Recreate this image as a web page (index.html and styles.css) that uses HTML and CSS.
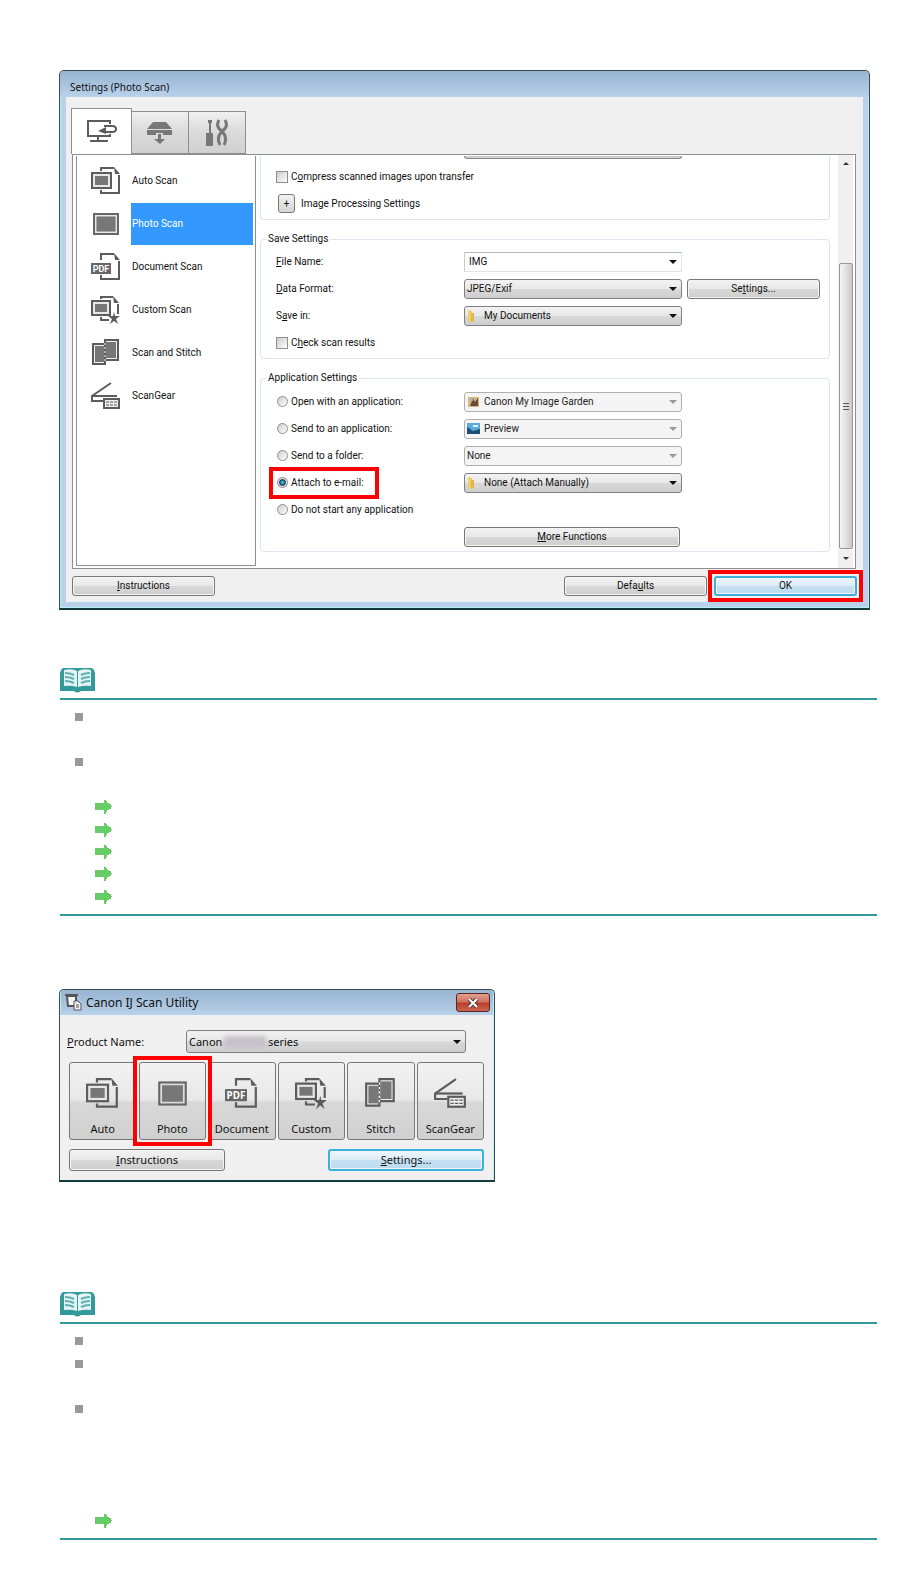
FILE: index.html
```html
<!DOCTYPE html>
<html lang="en">
<head>
    <meta charset="UTF-8">
    <meta name="viewport" content="width=device-width, initial-scale=1.0">
    <title>Attach to e-mail</title>
    <link rel="stylesheet" href="styles.css">
</head>
<body>
    <!-- shared icons -->
    <svg class="sprite" aria-hidden="true">
        <symbol id="i-auto" viewBox="0 0 30 28">
            <path d="M10 4V1h13M28 8v18H10v-3" fill="none" stroke="#5c5c5c" stroke-width="2"/>
            <path d="M23 0l6 7h-5z" fill="#5c5c5c"/>
            <rect x="1" y="6" width="19" height="15" fill="#e8e8e8" stroke="#5c5c5c" stroke-width="2"/>
            <rect x="4" y="9" width="13" height="9" fill="#777"/>
        </symbol>
        <symbol id="i-photo" viewBox="0 0 30 28">
            <rect x="3" y="4" width="24" height="20" fill="#eee" stroke="#666" stroke-width="2"/>
            <rect x="5" y="6" width="20" height="16" fill="#777" stroke="#ddd"/>
        </symbol>
        <symbol id="i-pdf" viewBox="0 0 30 28">
            <path d="M10 7V1h13M28 8v18H10v-4" fill="none" stroke="#5c5c5c" stroke-width="2"/>
            <path d="M23 0l6 7h-5z" fill="#5c5c5c"/>
            <rect x="0" y="10" width="20" height="11" fill="#666"/>
            <text x="10" y="19" font-size="9" font-weight="bold" text-anchor="middle" fill="#fff">PDF</text>
        </symbol>
        <symbol id="i-custom" viewBox="0 0 30 28">
            <path d="M10 3V1h12M27 8v10M10 21v3h8" fill="none" stroke="#5c5c5c" stroke-width="2"/>
            <path d="M22 0l6 7h-5z" fill="#5c5c5c"/>
            <rect x="1" y="5" width="18" height="14" fill="#e8e8e8" stroke="#5c5c5c" stroke-width="2"/>
            <rect x="4" y="8" width="12" height="8" fill="#777"/>
            <path d="M23 16l1 4h5l-4 3 2 5-4-3-4 3 2-5-4-3h5z" fill="#5c5c5c"/>
        </symbol>
        <symbol id="i-stitch" viewBox="0 0 30 28">
            <path d="M2 5h12v20H2zM14 1h13v20H14z" fill="#eee" stroke="#5c5c5c" stroke-width="2"/>
            <rect x="4" y="7" width="9" height="16" fill="#777"/>
            <rect x="15" y="3" width="10" height="16" fill="#777"/>
            <path d="M14 4v20" stroke="#fff" stroke-width="1" stroke-dasharray="2 2"/>
        </symbol>
        <symbol id="i-gear" viewBox="0 0 30 28">
            <path d="M20 1L1 14v5h11" fill="none" stroke="#5c5c5c" stroke-width="2"/>
            <path d="M1 14h25" stroke="#5c5c5c" stroke-width="2"/>
            <rect x="13" y="17" width="15" height="9" fill="#eee" stroke="#5c5c5c" stroke-width="2"/>
            <path d="M15 20h11M15 23h11" stroke="#5c5c5c" stroke-dasharray="3 1"/>
        </symbol>
        <symbol id="i-book" viewBox="0 0 35 26">
            <path d="M3 0h29q3 2 3 5v18H21q-4 3-7 0H0V5q0-3 3-5z" fill="#399"/>
            <path d="M4 2q8-2 13 1v16q-6-2-13-1zM31 2q-8-2-13 1v16q6-2 13-1z" fill="#e4f3f3"/>
            <path d="M5 5q5 0 9 2M5 9q5 0 9 2M5 13q5 0 9 2M30 5q-5 0-9 2M30 9q-5 0-9 2M30 13q-5 0-9 2" fill="none" stroke="#5fb0b0" stroke-width="2"/>
        </symbol>
        <symbol id="i-arrow" viewBox="0 0 17 14">
            <path d="M0 3h9V0h2v1h1v2h2v1h2v2h1v1h-1v2h-2v1h-2v2h-1v2H9v-4H0z" fill="#6c6"/>
        </symbol>
        <symbol id="i-folder" viewBox="0 0 13 14">
            <path d="M1 1l4 1v10l-4 1z" fill="#f0cf6a"/>
            <path d="M4 4h3v8l-3 1z" fill="#e0b54c"/>
            <path d="M8 9l4 1v2l-5 1z" fill="#d8d8d8"/>
        </symbol>
    </svg>

    <main class="page">
        <section class="window settings">
            <header class="titlebar">Settings (Photo Scan)</header>
            <div class="client">
                <nav class="tabs">
                    <button class="tab active" aria-label="Scanning from a computer">
                        <svg width="32" height="26" viewBox="0 0 32 26" fill="none" stroke="#5c5c5c" stroke-width="2">
                            <path d="M24 5V2H2v15h22v-2M12 17v5M4 22h18"/>
                            <path d="M18 7h8q4 0 4 3t-4 3h-8"/>
                            <path d="M12 12l8-4v7z" fill="#5c5c5c" stroke="none"/>
                        </svg>
                    </button>
                    <button class="tab" aria-label="Scanning from the operation panel">
                        <svg width="28" height="26" viewBox="0 0 28 26" fill="#777">
                            <path d="M7 2h13l6 7H1zM1 10h25v5h-9v-2h-7v2H1z"/>
                            <path d="M12 14h3v5h4l-5 5-6-5h4z"/>
                        </svg>
                    </button>
                    <button class="tab" aria-label="General settings">
                        <svg width="24" height="28" viewBox="0 0 24 28" fill="#777">
                            <path d="M3 1h4v3H6v10h2v13H1V14h3V4H3z"/>
                            <path d="M14 1q-4 7 3 11q-6 7-2 14M20 1q4 7-3 11q6 7 2 14" fill="none" stroke="#777" stroke-width="3"/>
                        </svg>
                    </button>
                </nav>

                <div class="panel">
                    <ul class="scan-list">
                        <li><svg><use href="#i-auto"/></svg><span>Auto Scan</span></li>
                        <li class="selected"><svg><use href="#i-photo"/></svg><span>Photo Scan</span></li>
                        <li><svg><use href="#i-pdf"/></svg><span>Document Scan</span></li>
                        <li><svg><use href="#i-custom"/></svg><span>Custom Scan</span></li>
                        <li><svg><use href="#i-stitch"/></svg><span>Scan and Stitch</span></li>
                        <li><svg><use href="#i-gear"/></svg><span>ScanGear</span></li>
                    </ul>

                    <form class="options">
                        <fieldset class="continued">
                            <div class="row cut"><span></span><div class="cut-combo"></div></div>
                            <div class="row">
                                <label class="check"><input type="checkbox"><span>C<u>o</u>mpress scanned images upon transfer</span></label>
                            </div>
                            <div class="row">
                                <div class="expander"><button type="button" id="expand">+</button><label for="expand">Image Processing Settings</label></div>
                            </div>
                        </fieldset>

                        <fieldset>
                            <legend>Save Settings</legend>
                            <div class="row">
                                <label for="file-name"><u>F</u>ile Name:</label>
                                <div class="combo editable"><input type="text" id="file-name" value="IMG"></div>
                            </div>
                            <div class="row">
                                <label for="format"><u>D</u>ata Format:</label>
                                <div class="combo"><select id="format"><option>JPEG/Exif</option></select></div>
                                <button type="button" class="btn side">Se<u>t</u>tings...</button>
                            </div>
                            <div class="row">
                                <label for="save-in">S<u>a</u>ve in:</label>
                                <div class="combo with-icon">
                                    <svg class="combo-icon"><use href="#i-folder"/></svg>
                                    <select id="save-in"><option>My Documents</option></select>
                                </div>
                            </div>
                            <div class="row">
                                <label class="check"><input type="checkbox"><span>C<u>h</u>eck scan results</span></label>
                            </div>
                        </fieldset>

                        <fieldset class="apps">
                            <legend>Application Settings</legend>
                            <div class="row">
                                <label class="check"><input type="radio" name="app"><span>Open with an application:</span></label>
                                <div class="combo with-icon off">
                                    <svg class="combo-icon" viewBox="0 0 13 14"><path d="M1 2h11v10H1z" fill="#d9b87c"/><path d="M3 11l3-8 2 4 3-4v8z" fill="#6b4a35"/><path d="M3 3h3v3H3z" fill="#9db8c9"/></svg>
                                    <select aria-label="Application to open" disabled><option>Canon My Image Garden</option></select>
                                </div>
                            </div>
                            <div class="row">
                                <label class="check"><input type="radio" name="app"><span>Send to an application:</span></label>
                                <div class="combo with-icon off">
                                    <svg class="combo-icon" viewBox="0 0 13 14"><path d="M0 1h13v11H0z" fill="#5aa9dc"/><path d="M0 12V5l6 4 7-2v5z" fill="#1d4f70"/><path d="M6 3h5v2H6z" fill="#e6f5ff"/></svg>
                                    <select aria-label="Application to send to" disabled><option>Preview</option></select>
                                </div>
                            </div>
                            <div class="row">
                                <label class="check"><input type="radio" name="app"><span>Send to a folder:</span></label>
                                <div class="combo off"><select aria-label="Folder" disabled><option>None</option></select></div>
                            </div>
                            <div class="row">
                                <label class="check marked"><input type="radio" name="app" checked><span>Attach to e-mail:</span></label>
                                <div class="combo with-icon">
                                    <svg class="combo-icon"><use href="#i-folder"/></svg>
                                    <select aria-label="E-mail client"><option>None (Attach Manually)</option></select>
                                </div>
                            </div>
                            <div class="row">
                                <label class="check"><input type="radio" name="app"><span>Do not start any application</span></label>
                            </div>
                            <div class="row">
                                <span></span>
                                <button type="button" class="btn more"><u>M</u>ore Functions</button>
                            </div>
                        </fieldset>
                    </form>

                    <div class="scrollbar">
                        <i class="up"></i>
                        <div class="thumb"><i></i><i></i><i></i></div>
                        <i class="down"></i>
                    </div>
                </div>

                <footer class="actions">
                    <button class="btn"><u>I</u>nstructions</button>
                    <button class="btn push">Defa<u>u</u>lts</button>
                    <button class="btn default marked">OK</button>
                </footer>
            </div>
        </section>

        <aside class="note">
            <svg class="book"><use href="#i-book"/></svg>
            <div class="note-body">
                <ul class="bullets">
                    <li class="tall"></li>
                    <li class="tall"></li>
                </ul>
                <ul class="links">
                    <li><svg><use href="#i-arrow"/></svg></li>
                    <li><svg><use href="#i-arrow"/></svg></li>
                    <li><svg><use href="#i-arrow"/></svg></li>
                    <li><svg><use href="#i-arrow"/></svg></li>
                    <li><svg><use href="#i-arrow"/></svg></li>
                </ul>
            </div>
        </aside>

        <section class="window utility">
            <header class="titlebar">
                <svg width="18" height="18" viewBox="0 0 18 18" fill="none" stroke="#555" stroke-width="1">
                    <path d="M2 2h9v10H3z" fill="#f4f4f4" stroke-width="2"/>
                    <path d="M0 1h13" stroke-width="2"/>
                    <path d="M9 7h4l3 3v6H9z" fill="#eee"/>
                    <path d="M11 11h3M11 13h3"/>
                </svg>
                <span>Canon IJ Scan Utility</span>
                <button class="close" aria-label="Close">
                    <svg width="12" height="10" viewBox="0 0 12 10"><path d="M2 1l8 8M10 1L2 9" stroke="#5a3a3a" stroke-width="4"/><path d="M2 1l8 8M10 1L2 9" stroke="#fff" stroke-width="2"/></svg>
                </button>
            </header>
            <div class="client">
                <div class="product">
                    <label for="product"><u>P</u>roduct Name:</label>
                    <div class="combo">
                        <select id="product"><option>Canon</option></select>
                        <span class="model"><i></i>series</span>
                    </div>
                </div>
                <div class="scan-buttons">
                    <button><svg><use href="#i-auto"/></svg>Auto</button>
                    <button class="marked"><svg><use href="#i-photo"/></svg>Photo</button>
                    <button><svg><use href="#i-pdf"/></svg>Document</button>
                    <button><svg><use href="#i-custom"/></svg>Custom</button>
                    <button><svg><use href="#i-stitch"/></svg>Stitch</button>
                    <button><svg><use href="#i-gear"/></svg>ScanGear</button>
                </div>
                <footer class="actions">
                    <button class="btn"><u>I</u>nstructions</button>
                    <button class="btn default push"><u>S</u>ettings...</button>
                </footer>
            </div>
        </section>

        <aside class="note last">
            <svg class="book"><use href="#i-book"/></svg>
            <div class="note-body">
                <ul class="bullets">
                    <li></li>
                    <li class="tall"></li>
                    <li class="long"></li>
                </ul>
                <ul class="links single">
                    <li><svg><use href="#i-arrow"/></svg></li>
                </ul>
            </div>
        </aside>
    </main>
</body>
</html>
```

FILE: styles.css
```css
* {
    box-sizing: border-box;
}

body {
    margin: 0;
    background-color: #fff;
    font-family: Roboto, "Noto Sans", sans-serif;
    font-size: 10px;
    line-height: 14px;
    color: #111;
}

ul {
    list-style: none;
    margin: 0;
    padding: 0;
}

button,
input,
select {
    font: inherit;
    color: inherit;
    margin: 0;
    padding: 0;
}

.sprite {
    display: none;
}

.page {
    padding: 70px 22px 30px 59px;
}

/* Windows */
.window {
    border: 1px solid #3a4a50;
    border-bottom: 2px solid #123c40;
    border-radius: 5px 5px 0 0;
    background-color: #b9d1ea;
    box-shadow: inset 0 0 0 1px #b5eef5;
}

.settings {
    max-width: 811px;
    padding: 0 6px 6px;
}

.titlebar {
    display: flex;
    align-items: center;
    height: 26px;
    margin: 0 -6px;
    padding: 6px 9px 0 10px;
    background: linear-gradient(#98b4d1, #b9d1ea);
    border-radius: 4px 4px 0 0;
    font-family: "Noto Sans", sans-serif;
    line-height: 16px;
}

.client {
    background-color: #f0f0f0;
}

.tabs {
    display: flex;
    align-items: flex-end;
    height: 57px;
    padding-left: 5px;
}

.tab {
    display: flex;
    align-items: center;
    justify-content: center;
    width: 57px;
    height: 43px;
    border: 1px solid #8c8e94;
    border-left: 0;
    background: linear-gradient(#f0f0f0, #dcdcdc 45%, #d0d0d0);
}

.tab.active {
    width: 61px;
    height: 46px;
    border: 1px solid #8c8e94;
    border-bottom: 0;
    background: #fff;
}

.panel {
    display: flex;
    margin: 0 7px 0 6px;
    height: 415px;
    border: 1px solid #8c8e94;
    background-color: #fff;
}

.scan-list {
    flex: none;
    width: 180px;
    margin: 1px 0 2px 3px;
    padding: 3px 2px 0 14px;
    border: 1px solid #8c8e94;
    border-top: 0;
}

.scan-list li {
    display: flex;
    align-items: center;
    height: 43px;
}

.scan-list svg {
    width: 30px;
    height: 28px;
    margin-right: 10px;
}

.scan-list span {
    flex: 1;
    line-height: 42px;
    padding-left: 1px;
}

.scan-list .selected span {
    background-color: #3399ff;
    color: #fff;
}

.options {
    flex: 1;
    min-width: 0;
    padding: 1px 8px 0 4px;
}

fieldset {
    min-width: 0;
    margin: 12px 0 0;
    padding: 2px 9px 2px 15px;
    border: 1px solid #dce6f0;
    border-radius: 4px;
}

fieldset.continued {
    margin-top: 0;
    padding: 0 9px 2px 15px;
    border-top: 0;
    border-radius: 0 0 4px 4px;
}

fieldset.apps {
    padding-top: 3px;
    padding-bottom: 1px;
}

legend {
    margin-left: -10px;
    padding: 0 2px;
}

.row {
    display: grid;
    grid-template-columns: 188px minmax(0, 218px) minmax(0, 1fr);
    align-items: center;
    height: 27px;
}

.row.cut {
    height: 7px;
    align-items: start;
}

.cut-combo {
    height: 3px;
    border: 1px solid #8a8a8a;
    border-top: 0;
    border-radius: 0 0 3px 3px;
    background-color: #cfcfcf;
}

.check {
    display: flex;
    align-items: center;
    justify-self: start;
    height: 18px;
    white-space: nowrap;
}

.check input {
    appearance: none;
    flex: none;
    width: 12px;
    height: 12px;
    margin-right: 3px;
    border: 1px solid #8e8f8f;
    background: linear-gradient(135deg, #ccc, #fff);
}

.check input[type="radio"] {
    width: 11px;
    height: 11px;
    margin-left: 1px;
    border-radius: 50%;
}

.check input[type="radio"]:checked {
    background: radial-gradient(#3fa9d8 15%, #14405c 45%, #ddd 60%);
}

/* Red frame round the item to click */
.marked {
    position: relative;
}

.marked::after {
    content: "";
    position: absolute;
    inset: -8px;
    z-index: 1;
    border: 4px solid #f00;
    pointer-events: none;
}

.check.marked {
    padding-right: 8px;
}

.check.marked::after,
.scan-buttons .marked::after {
    inset: -7px;
}

.expander {
    display: flex;
    align-items: center;
    gap: 6px;
    padding-left: 2px;
    white-space: nowrap;
}

.expander button {
    width: 17px;
    height: 19px;
    border: 1px solid #777;
    border-radius: 3px;
    background: linear-gradient(#f2f2f2, #d4d4d4);
    line-height: 14px;
}

/* Drop-downs */
.combo {
    position: relative;
}

.combo select,
.combo input {
    appearance: none;
    display: block;
    width: 100%;
    height: 20px;
    padding: 0 20px 0 2px;
    border: 1px solid #7f7f7f;
    border-radius: 3px;
    background: linear-gradient(#f2f2f2, #e8e8e8 48%, #d8d8d8 52%, #cecece);
    opacity: 1;
}

.combo.editable input {
    padding-left: 4px;
    border-color: #b4b8bc #dce4ee #dce4ee #c8ccd2;
    border-radius: 1px;
    background: #fff;
}

.combo.off select {
    border-color: #b0b0b0;
    background: #f4f4f4;
    color: #222;
}

.combo.with-icon select {
    padding-left: 19px;
}

.combo::after {
    content: "";
    position: absolute;
    top: 8px;
    right: 5px;
    border: 4px solid transparent;
    border-top-color: #111;
    border-bottom: 0;
    pointer-events: none;
}

.combo.off::after {
    border-top-color: #999;
}

.combo-icon {
    position: absolute;
    top: 3px;
    left: 3px;
    width: 13px;
    height: 14px;
}

.btn {
    height: 20px;
    border: 1px solid #777;
    border-radius: 3px;
    background: linear-gradient(#f2f2f2, #e8e8e8 48%, #d8d8d8 52%, #cecece);
    box-shadow: inset 0 0 0 1px #f4f4f4;
}

.btn.default {
    border: 2px solid #3cb0dc;
    background: linear-gradient(#eef6fb, #dcecf6 48%, #c6e0f2 52%, #bcdcf0);
}

.btn.side {
    margin-left: 5px;
}

.btn.more {
    margin-right: 2px;
}

/* Scroll bar */
.scrollbar {
    display: flex;
    flex-direction: column;
    align-items: center;
    width: 15px;
    margin-right: 2px;
    padding: 7px 0 8px;
    background-color: #f0f0f0;
}

.scrollbar .up,
.scrollbar .down {
    border: 3px solid transparent;
}

.scrollbar .up {
    border-top: 0;
    border-bottom-color: #333;
    margin-bottom: 98px;
}

.scrollbar .down {
    border-bottom: 0;
    border-top-color: #333;
    margin-top: 8px;
}

.thumb {
    flex: 1;
    display: flex;
    flex-direction: column;
    align-items: center;
    justify-content: center;
    gap: 2px;
    width: 14px;
    border: 1px solid #989898;
    border-radius: 2px;
    background: linear-gradient(90deg, #f4f4f4, #e4e4e4 45%, #c8c8c8);
}

.thumb i {
    width: 6px;
    height: 1px;
    background-color: #555;
}

.actions {
    display: flex;
    gap: 7px;
    padding: 7px 6px 6px;
}

.actions .btn {
    width: 143px;
}

.actions .push {
    margin-left: auto;
}

/* Notes */
.note {
    margin: 58px 0 0 1px;
}

.book {
    display: block;
    width: 35px;
    height: 26px;
}

.note-body {
    margin-top: 4px;
    padding-top: 6px;
    border-top: 2px solid #399;
    border-bottom: 2px solid #399;
}

.bullets {
    padding-left: 15px;
}

.bullets li {
    height: 23px;
    padding-top: 7px;
}

.bullets li::before {
    content: "";
    display: block;
    width: 8px;
    height: 8px;
    background-color: #999;
}

.bullets .tall {
    height: 45px;
}

.bullets .long {
    height: 112px;
}

.links {
    display: grid;
    grid-auto-rows: 1fr;
    align-items: center;
    height: 112px;
    margin-bottom: 6px;
    padding-left: 35px;
}

.links.single {
    height: 22px;
}

.links svg {
    display: block;
    width: 17px;
    height: 14px;
}

/* Scan utility */
.utility {
    max-width: 436px;
    margin-top: 73px;
    font-family: "Noto Sans", sans-serif;
    font-size: 11px;
}

.utility .titlebar {
    margin: 0 1px;
    height: 25px;
    padding: 0 3px 0 4px;
    font-size: 12px;
}

.utility .titlebar span {
    margin-left: 3px;
}

.utility .client {
    margin: 0 1px 0 0;
    padding: 15px 9px 9px;
}

.close {
    display: flex;
    align-items: center;
    justify-content: center;
    width: 34px;
    height: 19px;
    margin-left: auto;
    border: 1px solid #5c2420;
    border-radius: 3px;
    background: linear-gradient(#e0a090, #cf7060 48%, #b83c28 52%, #c86450);
}

.product {
    display: grid;
    grid-template-columns: 119px minmax(0, 280px);
    align-items: center;
    margin-left: -2px;
}

.utility .combo select {
    height: 23px;
}

.utility .combo::after {
    top: 10px;
}

.model {
    position: absolute;
    top: 5px;
    left: 38px;
    display: flex;
    align-items: center;
    pointer-events: none;
}

.model i {
    width: 42px;
    height: 12px;
    margin-right: 2px;
    background-color: #c8c2ca;
    filter: blur(2px);
}

.scan-buttons {
    display: grid;
    grid-template-columns: repeat(6, 1fr);
    gap: 2px;
    margin-top: 9px;
}

.scan-buttons button {
    display: flex;
    flex-direction: column;
    align-items: center;
    justify-content: flex-end;
    height: 78px;
    min-width: 0;
    padding-bottom: 3px;
    border: 1px solid #777;
    border-radius: 3px;
    background: linear-gradient(#f2f2f2, #e8e8e8 48%, #d8d8d8 52%, #d0d0d0);
}

.scan-buttons svg {
    width: 33px;
    height: 31px;
    margin-bottom: 13px;
}

.utility .actions {
    padding: 9px 0 0;
}

.utility .btn {
    width: 156px;
    height: 22px;
}

.note.last {
    margin-top: 110px;
}
```
